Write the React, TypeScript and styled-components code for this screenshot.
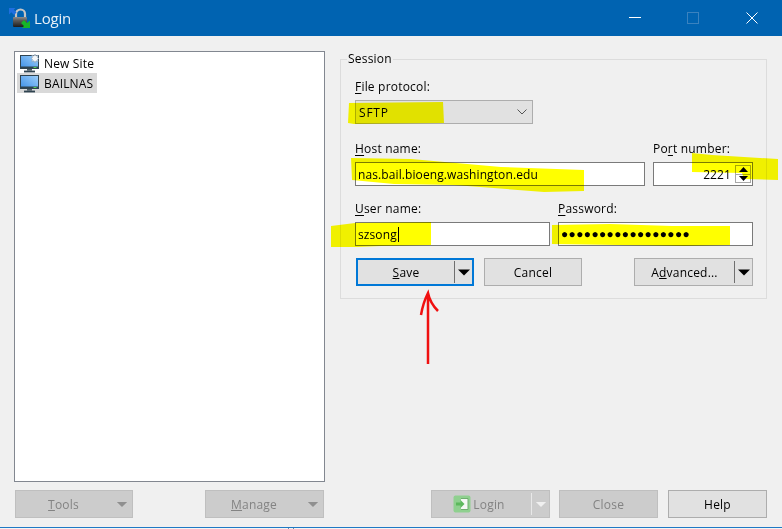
import React from 'react';
import styled, { createGlobalStyle } from 'styled-components';

const GlobalStyle = createGlobalStyle`
  html, body {
    margin: 0;
    padding: 0;
    background: #f0f0f0;
  }
  body {
    font-family: "Open Sans", "Noto Sans", "Liberation Sans", sans-serif;
    font-size: 12px;
    color: #000;
  }
`;

const Win = styled.div`
  position: relative;
  width: 782px;
  height: 529px;
  display: flex;
  flex-direction: column;
  overflow: hidden;
  background: #f0f0f0;
`;

const TitleBar = styled.div`
  height: 36px;
  flex: none;
  display: flex;
  align-items: center;
  background: #0063b1;
  padding: 0 1px 0 9px;
`;

const TitleText = styled.div`
  flex: 1;
  margin-left: 4px;
  color: #e8f0f7;
  font-size: 15px;
  letter-spacing: -0.2px;
`;

const WinButton = styled.div`
  width: 58.5px;
  height: 36px;
  display: flex;
  align-items: center;
  justify-content: center;
`;

const Body = styled.div`
  flex: 1;
  min-height: 0;
  display: flex;
  gap: 15px;
  padding: 15px 15px 9px 14px;
`;

const LeftCol = styled.div`
  width: 311px;
  display: flex;
  flex-direction: column;
  gap: 8px;
`;

const Tree = styled.div`
  flex: 1;
  background: #fff;
  border: 1px solid #828790;
  padding: 1px 2px;
`;

const TreeRow = styled.div<{ $selected?: boolean }>`
  display: flex;
  width: fit-content;
  height: 20px;
  align-items: center;
  gap: 5px;
  padding: 0 4px 0 3px;
  background: ${p => (p.$selected ? '#d9d9d9' : 'transparent')};
  letter-spacing: 0.15px;
`;

const LeftButtons = styled.div`
  display: flex;
  justify-content: space-between;
  padding: 0 1px;
`;

const RightCol = styled.div`
  flex: 1;
  display: flex;
  flex-direction: column;
`;

const Group = styled.fieldset`
  margin: 0;
  padding: 12px 13px 12px 14px;
  height: 248px;
  box-sizing: border-box;
  border: 1px solid #dcdcdc;
  min-width: 0;
  display: flex;
  flex-direction: column;
`;

const Legend = styled.legend`
  padding: 0 1px;
  margin-left: -8px;
  line-height: 16px;
  letter-spacing: 0.2px;
`;

const FieldRow = styled.div<{ $cols: string; $top: number }>`
  display: grid;
  grid-template-columns: ${p => p.$cols};
  column-gap: 8px;
  margin-top: ${p => p.$top}px;
`;

const Label = styled.div`
  height: 16px;
  line-height: 16px;
  margin-bottom: 5px;
  letter-spacing: 0.2px;
  white-space: nowrap;
  u {
    text-underline-offset: 2px;
  }
`;

const Field = styled.div<{ $right?: boolean }>`
  height: 24px;
  box-sizing: border-box;
  border: 1px solid #7a7a7a;
  background: #fff;
  display: flex;
  align-items: center;
  justify-content: ${p => (p.$right ? 'flex-end' : 'flex-start')};
  padding: 0 ${p => (p.$right ? 1 : 2)}px 0 2px;
  letter-spacing: 0.1px;
  white-space: nowrap;
`;

const Caret = styled.span`
  display: inline-block;
  width: 1px;
  height: 15px;
  background: #000;
  margin-left: 1px;
`;

const Dots = styled.span`
  font-size: 12px;
  letter-spacing: 0.35px;
  font-family: "Liberation Sans", sans-serif;
  font-weight: bold;
`;

const Spin = styled.div`
  display: flex;
  flex-direction: column;
  margin-left: 4px;
  width: 16px;
  height: 18px;
  border: 1px solid #a8a8a8;
  box-sizing: border-box;
`;

const SpinPart = styled.div`
  flex: 1;
  display: flex;
  align-items: center;
  justify-content: center;
  & + & {
    border-top: 1px solid #a8a8a8;
  }
`;

const Combo = styled.div`
  height: 24px;
  width: 178px;
  box-sizing: border-box;
  border: 1px solid #adadad;
  background: #e1e1e1;
  display: flex;
  align-items: center;
  justify-content: space-between;
  padding: 0 5px 0 3px;
  letter-spacing: 0.8px;
`;

const ButtonRow = styled.div`
  display: flex;
  margin-top: 12px;
  padding-left: 1px;
`;

type BtnKind = 'normal' | 'focus' | 'disabled';

const Btn = styled.div<{ $w: number; $kind?: BtnKind; $ml?: number }>`
  width: ${p => p.$w}px;
  height: 28px;
  margin-left: ${p => p.$ml ?? 0}px;
  box-sizing: border-box;
  display: flex;
  align-items: center;
  letter-spacing: 0.2px;
  background: ${p => (p.$kind === 'disabled' ? '#cccccc' : '#e1e1e1')};
  color: ${p => (p.$kind === 'disabled' ? '#838383' : '#000')};
  border: ${p =>
    p.$kind === 'focus'
      ? '2px solid #0078d7'
      : p.$kind === 'disabled'
        ? '1px solid #bfbfbf'
        : '1px solid #adadad'};
`;

const BtnLabel = styled.div<{ $pr?: number }>`
  flex: 1;
  display: flex;
  align-items: center;
  justify-content: center;
  gap: 2px;
  padding-right: ${p => p.$pr ?? 0}px;
`;

const BtnArrow = styled.div<{ $line?: string; $w?: number }>`
  width: ${p => p.$w ?? 17}px;
  height: 22px;
  flex: none;
  display: flex;
  align-items: center;
  justify-content: center;
  border-left: 1px solid ${p => p.$line ?? 'transparent'};
`;

const BottomRow = styled.div`
  display: flex;
  justify-content: flex-end;
  margin-top: auto;
`;

const BottomLine = styled.div`
  height: 1px;
  flex: none;
  background: #1f78c4;
`;

const BottomStrip = styled.div`
  height: 1px;
  flex: none;
  display: flex;
  gap: 4px;
  padding-left: 288px;
  background: #f4f4f4;
`;

const Tick = styled.span`
  width: 1px;
  background: #6f8aa0;
`;

const Overlay = styled.svg`
  position: absolute;
  left: 0;
  top: 0;
  pointer-events: none;
`;

const Marker = styled.g`
  mix-blend-mode: multiply;
`;

const Triangle = ({ color, w = 14 }: { color: string; w?: number }) => (
  <svg width={w} height={7} viewBox="0 0 14 7">
    <path d="M1 0.5h12L7 6.5z" fill={color} />
  </svg>
);

const Monitor = ({ star }: { star?: boolean }) => (
  <svg width={19} height={19} viewBox="0 0 19 19">
    <defs>
      <linearGradient id="scr" x1="0" y1="1" x2="1" y2="0">
        <stop offset="0" stopColor="#3d8fe6" />
        <stop offset="1" stopColor="#9fd0fa" />
      </linearGradient>
    </defs>
    <rect x="0.5" y="1.500" width="18" height="13" fill="url(#scr)" stroke="#2f4350" />
    <rect x="1" y="12.500" width="17" height="2.500" fill="#2f4350" />
    <rect x="13.500" y="13" width="3" height="1" fill="#4fd34f" />
    <rect x="7" y="15" width="5" height="1.600" fill="#4a5a64" />
    <rect x="4" y="16.600" width="11" height="1.800" fill="#2f4350" />
    {star && (
      <path
        d="M15 0l1 2 2.200-.8-.7 2.200 1.500 1-1.500 1 .7 2.200-2.200-.8-1 2-1-2-2.200.8.7-2.200-1.500-1 1.500-1-.7-2.200 2.200.8z"
        fill="#f4f6f8"
        stroke="#8ba0b4"
        strokeWidth="0.6"
      />
    )}
  </svg>
);

const LockIcon = () => (
  <svg width={21} height={21} viewBox="0 0 21 21">
    <defs>
      <linearGradient id="lockBody" x1="0" y1="0" x2="0" y2="1">
        <stop offset="0" stopColor="#8c8c8c" />
        <stop offset="0.35" stopColor="#5a5a5a" />
        <stop offset="1" stopColor="#1c1c1c" />
      </linearGradient>
    </defs>
    <path d="M7 10V6a4.500 4.500 0 0 1 9 0v4" fill="none" stroke="#c4c4c4" strokeWidth="2.200" />
    <rect x="4" y="9" width="14" height="10" rx="1" fill="url(#lockBody)" />
    <path d="M0 0h6.500L4.800 1.800 7.500 4.500 5 7 2.300 4.300 0 6.500z" fill="#1f6fe0" />
    <path d="M21 20h-8l2-2-3-3 3-3 3 3 3-2.500z" fill="#16b52a" />
  </svg>
);

const LoginIcon = () => (
  <svg width={18} height={18} viewBox="0 0 18 18">
    <rect x="0.5" y="0.5" width="17" height="17" rx="2" fill="#8fd08f" />
    <path d="M8 3.500h7v11H8" fill="#f4f8f4" stroke="#6fae6f" />
    <path d="M3 7.500h4.500V5l4 4-4 4v-2.500H3z" fill="#5cb85c" />
  </svg>
);

const App = () => (
  <Win>
    <GlobalStyle />
    <TitleBar>
      <LockIcon />
      <TitleText>Login</TitleText>
      <WinButton>
        <svg width={12} height={2} viewBox="0 0 12 2">
          <rect width="12" height="1" fill="#fff" />
        </svg>
      </WinButton>
      <WinButton>
        <svg width={12} height={12} viewBox="0 0 12 12">
          <rect x="0.5" y="0.5" width="11" height="11" fill="none" stroke="#3a82bf" />
        </svg>
      </WinButton>
      <WinButton>
        <svg width={12} height={12} viewBox="0 0 12 12">
          <path d="M0.500 0.500l11 11M11.500 0.500l-11 11" stroke="#fff" fill="none" />
        </svg>
      </WinButton>
    </TitleBar>
    <Body>
      <LeftCol>
        <Tree>
          <TreeRow>
            <Monitor star />
            New Site
          </TreeRow>
          <TreeRow $selected>
            <Monitor />
            BAILNAS
          </TreeRow>
        </Tree>
        <LeftButtons>
          <Btn $w={118} $kind="disabled">
            <BtnLabel>
              <span>
                <u>T</u>ools
              </span>
            </BtnLabel>
            <BtnArrow $w={20}>
              <Triangle color="#8f8f8f" w={12} />
            </BtnArrow>
          </Btn>
          <Btn $w={119} $kind="disabled">
            <BtnLabel>
              <span>
                <u>M</u>anage
              </span>
            </BtnLabel>
            <BtnArrow $w={20}>
              <Triangle color="#8f8f8f" w={12} />
            </BtnArrow>
          </Btn>
        </LeftButtons>
      </LeftCol>
      <RightCol>
        <Group>
          <Legend>Session</Legend>
          <Label>
            <u>F</u>ile protocol:
          </Label>
          <Combo>
            SFTP
            <svg width={10} height={6} viewBox="0 0 10 6">
              <path d="M0.500 0.500L5 5l4.500-4.500" fill="none" stroke="#555" />
            </svg>
          </Combo>
          <FieldRow $cols="290px 100px" $top={17}>
            <div>
              <Label>
                <u>H</u>ost name:
              </Label>
              <Field>nas.bail.bioeng.washington.edu</Field>
            </div>
            <div>
              <Label>
                Po<u>r</u>t number:
              </Label>
              <Field $right>
                2221
                <Spin>
                  <SpinPart>
                    <svg width={9} height={5} viewBox="0 0 9 5">
                      <path d="M4.500 0L9 5H0z" />
                    </svg>
                  </SpinPart>
                  <SpinPart>
                    <svg width={9} height={5} viewBox="0 0 9 5">
                      <path d="M0 0h9L4.500 5z" />
                    </svg>
                  </SpinPart>
                </Spin>
              </Field>
            </div>
          </FieldRow>
          <FieldRow $cols="195px 195px" $top={15}>
            <div>
              <Label>
                <u>U</u>ser name:
              </Label>
              <Field>
                szsong
                <Caret />
              </Field>
            </div>
            <div>
              <Label>
                <u>P</u>assword:
              </Label>
              <Field>
                <Dots>●●●●●●●●●●●●●●●●●</Dots>
              </Field>
            </div>
          </FieldRow>
          <ButtonRow>
            <Btn $w={118} $kind="focus">
              <BtnLabel>
                <span>
                  <u>S</u>ave
                </span>
              </BtnLabel>
              <BtnArrow $line="#6f6f6f">
                <Triangle color="#000" />
              </BtnArrow>
            </Btn>
            <Btn $w={98} $ml={10}>
              <BtnLabel>Cancel</BtnLabel>
            </Btn>
            <Btn $w={119} $ml={52}>
              <BtnLabel>
                <span>
                  A<u>d</u>vanced...
                </span>
              </BtnLabel>
              <BtnArrow $line="#6f6f6f">
                <Triangle color="#000" />
              </BtnArrow>
            </Btn>
          </ButtonRow>
        </Group>
        <BottomRow>
          <Btn $w={119} $kind="disabled">
            <BtnLabel $pr={5}>
              <LoginIcon />
              Login
            </BtnLabel>
            <BtnArrow $line="#e8e8e8">
              <Triangle color="#f0f0f0" w={12} />
            </BtnArrow>
          </Btn>
          <Btn $w={99} $ml={9} $kind="disabled">
            <BtnLabel>Close</BtnLabel>
          </Btn>
          <Btn $w={99} $ml={10}>
            <BtnLabel>Help</BtnLabel>
          </Btn>
        </BottomRow>
      </RightCol>
    </Body>
    <BottomLine />
    <BottomStrip>
      <Tick />
      <Tick />
    </BottomStrip>
    {/* yellow marker strokes and the red arrow drawn on top of the dialog */}
    <Overlay width={782} height={529} viewBox="0 0 782 529">
      <Marker fill="#ffff00">
        <path d="M349 103l94-1 1 21-90 1-6-1z" />
        <path d="M351 158l60 1 90 8 83 3 0 21-40 1-90-7-60-1-42-4z" />
        <path d="M692 153l20 2 66 4 0 21-34-1-2-6-50-1z" />
        <path d="M331 226l24-3 76-1v23l-50 1-24 1-26 0z" />
        <path d="M552 225l58-1 62 2 58 0v19l-46 1-132-2z" />
      </Marker>
      <path
        d="M428 364V293M421 315q2-12 7-22q2 10 10 18"
        fill="none"
        stroke="#f01010"
        strokeWidth="2.500"
      />
    </Overlay>
  </Win>
);

export default App;
